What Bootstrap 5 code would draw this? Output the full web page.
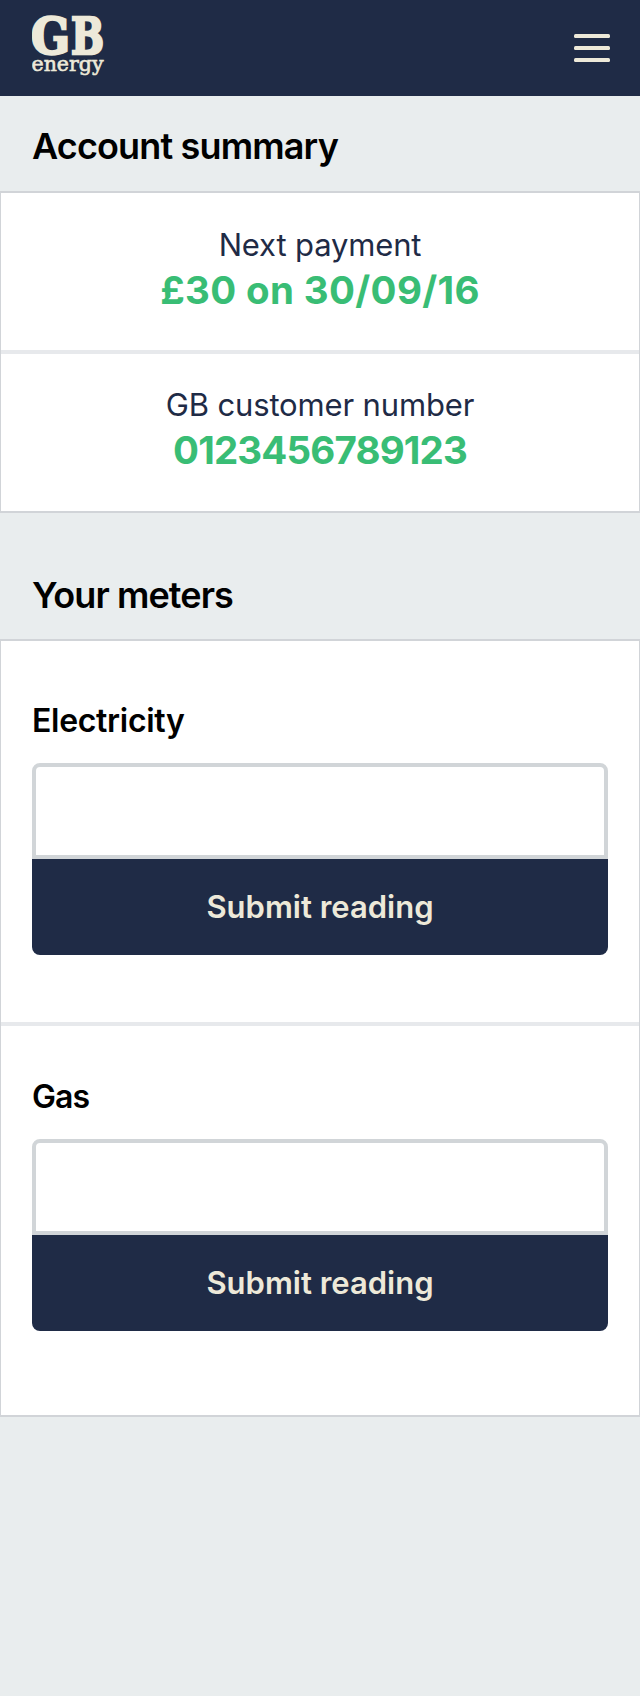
<!DOCTYPE html>
<html lang="en">
<head>
<meta charset="utf-8">
<meta name="viewport" content="width=device-width, initial-scale=1">
<title>GB energy – Account summary</title>
<link href="https://cdn.jsdelivr.net/npm/bootstrap@5.3.0/dist/css/bootstrap.min.css" rel="stylesheet">
<style>
  :root { --navy: #1f2b46; --cream: #ede9d9; --line: #d1d4d8; }
  body { background: #e9edee; color: #000; font-family: Inter, "Liberation Sans", sans-serif; min-height: 1696px; }
  .topbar { background: var(--navy); height: 96px; padding: 0 30px 0 32px; }
  .topbar svg { display: block; fill: var(--cream); }
  .section-title { font-size: 36px; font-weight: 600; line-height: 44px; margin: 0; padding: 28px 32px 0; height: 95px; letter-spacing: -.85px; }
  .section-title.second { height: 126px; padding-top: 60px; letter-spacing: -.9px; }
  .panel { background: #fff; border: 1px solid var(--line); border-width: 2px 1px; border-radius: 0; }
  .summary-item { height: 157px; padding-top: 32px; text-align: center; }
  .summary-item + .summary-item, .meter + .meter { border-top: 4px solid #e7e9ec; }
  .summary-item + .summary-item { height: 161px; padding-top: 31px; }
  .caption-text { color: var(--navy); font-size: 31px; line-height: 40px; letter-spacing: -.15px; }
  .figure-text { color: #39bd75; font-size: 38.5px; font-weight: 700; line-height: 50px; letter-spacing: .35px; }
  .figure-text.account-no { letter-spacing: -.85px; }
  .meter { height: 381px; padding: 60px 31px 0; }
  .meter + .meter { height: 393px; padding-top: 51px; }
  .meter label { display: block; font-size: 32px; font-weight: 600; line-height: 40px; margin-bottom: 22.4px; letter-spacing: -.3px; }
  .meter + .meter label { letter-spacing: -.9px; }
  .reading { height: 96px; border: 4px solid #d1d5d8; border-radius: 8px 8px 0 0; background: #fff; font-size: 32px; }
  .btn-reading { height: 96px; background: var(--navy); color: var(--cream); border: 0; border-radius: 0 0 8px 8px; font-size: 31px; font-weight: 600; }
  .btn-reading:hover { background: #2a395b; color: var(--cream); }
</style>
</head>
<body>
<nav class="topbar d-flex align-items-center justify-content-between">
  <a href="#" aria-label="GB energy">
    <svg width="80" height="96" viewBox="0 0 80 96">
      <g font-family="'DejaVu Serif', serif" font-weight="700" font-size="50" stroke="#ede9d9" stroke-width="2.6">
        <text x="-1" y="54" textLength="39" lengthAdjust="spacingAndGlyphs">G</text>
        <text x="39" y="54" textLength="33" lengthAdjust="spacingAndGlyphs">B</text>
      </g>
      <text x="-.5" y="71" font-family="'DejaVu Serif', serif" font-size="20" stroke="#ede9d9" stroke-width=".6" textLength="72" lengthAdjust="spacingAndGlyphs">energy</text>
    </svg>
  </a>
  <button class="btn p-0 border-0" type="button" aria-label="Menu">
    <svg width="36" height="28" viewBox="0 0 36 28">
      <rect width="36" height="4" rx="1.5"/>
      <rect y="12" width="36" height="4" rx="1.5"/>
      <rect y="24" width="36" height="4" rx="1.5"/>
    </svg>
  </button>
</nav>
<main>
  <h1 class="section-title">Account summary</h1>
  <section class="panel">
    <div class="summary-item">
      <div class="caption-text">Next payment</div>
      <div class="figure-text">£30 on 30/09/16</div>
    </div>
    <div class="summary-item">
      <div class="caption-text">GB customer number</div>
      <div class="figure-text account-no">0123456789123</div>
    </div>
  </section>
  <h2 class="section-title second">Your meters</h2>
  <section class="panel">
    <form class="meter">
      <label for="electricity">Electricity</label>
      <input class="form-control reading" id="electricity" type="text">
      <button class="btn btn-reading w-100" type="button">Submit reading</button>
    </form>
    <form class="meter">
      <label for="gas">Gas</label>
      <input class="form-control reading" id="gas" type="text">
      <button class="btn btn-reading w-100" type="button">Submit reading</button>
    </form>
  </section>
</main>
<script src="https://cdn.jsdelivr.net/npm/bootstrap@5.3.0/dist/js/bootstrap.bundle.min.js"></script>
</body>
</html>
